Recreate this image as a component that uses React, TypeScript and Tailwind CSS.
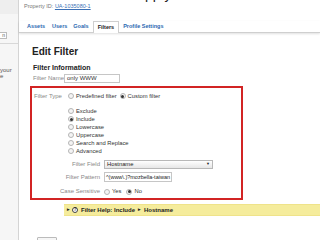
import React from "react";

function Radio({ checked = false }: { checked?: boolean }) {
  return (
    <span className="inline-flex w-[6px] h-[6px] rounded-full border border-[#b5b5b5] bg-[#f4f4f4] items-center justify-center shrink-0">
      {checked && <span className="w-[3px] h-[3px] rounded-full bg-[#333]" />}
    </span>
  );
}

function Opt({ label, checked = false }: { label: string; checked?: boolean }) {
  return (
    <div className="flex items-center h-[8px] gap-[2px]">
      <Radio checked={checked} />
      <span>{label}</span>
    </div>
  );
}

export default function App() {
  return (
    <div
      className="w-[320px] h-[240px] overflow-hidden flex items-start bg-white text-[#333]"
      style={{ fontFamily: '"Liberation Sans", Arial, sans-serif' }}
    >
      {/* sidebar */}
      <div className="w-[19px] h-[240px] shrink-0 border-r border-[#d4d4d4] bg-[#f6f6f6]">
        <div className="h-[14px] bg-[#eeeeee]" />
        <div className="h-[18px]" />
        <div className="w-[7px] h-[7px] border border-l-0 border-[#bbb] bg-white text-[5px] leading-[5px] flex items-center justify-end pr-[1px] text-[#555]">
          n
        </div>
        <div className="h-[4px]" />
        <div className="h-px bg-[#d8d8d8]" />
        <div className="h-[23px]" />
        <div className="text-[6px] leading-[6px] text-[#555]">your</div>
        <div className="text-[6px] leading-[6px] text-[#555]">e</div>
      </div>

      {/* main */}
      <div className="flex-1 min-w-0">
        <div className="h-[3px] overflow-hidden">
          <div className="h-[16px] text-[14px] leading-[16px] text-[#222] -mt-[14px] pl-[126px] whitespace-nowrap">
            pp y
          </div>
        </div>
        <div className="h-[7px] flex items-center pl-[5px] text-[5.5px] text-[#777] whitespace-nowrap">
          Property ID:&nbsp;<span className="text-[#3a6fb5] underline">UA-1035080-1</span>
        </div>
        <div className="h-[11px]" />
        <div className="h-[12px] flex items-end pl-[8px] border-b border-[#cfcfcf] shadow-[0_1px_2px_rgba(0,0,0,0.12)] text-[5.5px] font-bold text-[#2a67b0] whitespace-nowrap">
          <span className="h-[11px] flex items-center">Assets</span>
          <span className="h-[11px] flex items-center ml-[7px]">Users</span>
          <span className="h-[11px] flex items-center ml-[6px]">Goals</span>
          <span className="h-[12px] -mb-px flex items-center ml-[4px] px-[4px] border border-b-0 border-[#cfcfcf] bg-white text-[#222]">
            Filters
          </span>
          <span className="h-[11px] flex items-center ml-[4px]">Profile Settings</span>
        </div>

        <div className="pl-[13px]">
          <div className="h-[12px]" />
          <div className="h-[12px] flex items-center text-[10px] font-bold text-[#222]">Edit Filter</div>
          <div className="h-[7px]" />
          <div className="h-[9px] flex items-center text-[7px] font-bold text-[#222] pl-[1px]">
            Filter Information
          </div>
          <div className="h-[10px] flex items-center pl-[1px] text-[6px] text-[#888] whitespace-nowrap">
            <span className="w-[31px]">Filter Name</span>
            <span className="w-[56px] h-[9px] border border-[#c6c6c6] bg-white text-[#333] flex items-center pl-[2px]">
              only WWW
            </span>
          </div>
          <div className="h-[3px]" />

          {/* red box */}
          <div className="w-[213px] h-[114px] -ml-[2px] border-2 border-[#d22424] flex flex-col text-[5.8px] whitespace-nowrap">
            <div className="h-[4px] shrink-0" />
            <div className="h-[8px] shrink-0 flex items-center">
              <span className="w-[36px] pl-[2px] text-[#888] text-[6px]">Filter Type</span>
              <Radio />
              <span className="ml-[2px]">Predefined filter</span>
              <span className="ml-[3px]" />
              <Radio checked />
              <span className="ml-[2px]">Custom filter</span>
            </div>
            <div className="h-[7px] shrink-0" />
            <div className="pl-[36px] flex flex-col shrink-0">
              <Opt label="Exclude" />
              <Opt label="Include" checked />
              <Opt label="Lowercase" />
              <Opt label="Uppercase" />
              <Opt label="Search and Replace" />
              <Opt label="Advanced" />
            </div>
            <div className="h-[4px] shrink-0" />
            <div className="h-[10px] shrink-0 flex items-center">
              <span className="w-[72px] text-right pr-[4px] text-[#888] text-[6px]">Filter Field</span>
              <span className="w-[109px] h-[9px] border border-[#b8b8b8] bg-gradient-to-b from-white to-[#e6e6e6] flex items-center pl-[2px] text-[#222]">
                Hostname
                <span className="ml-auto mr-[2px] text-[4px] leading-none">▼</span>
              </span>
            </div>
            <div className="h-[3px] shrink-0" />
            <div className="h-[10px] shrink-0 flex items-center">
              <span className="w-[72px] text-right pr-[4px] text-[#888] text-[6px]">Filter Pattern</span>
              <span className="w-[68px] h-[10px] border border-[#c6c6c6] bg-white flex items-center pl-[1px] overflow-hidden text-[5.5px] text-[#222]">
                ^(www\.)?mozbella-taiwan
              </span>
            </div>
            <div className="h-[5px] shrink-0" />
            <div className="h-[9px] shrink-0 flex items-center">
              <span className="w-[72px] text-right pr-[4px] text-[#888] text-[6px]">Case Sensitive</span>
              <Radio />
              <span className="ml-[2px]">Yes</span>
              <span className="ml-[5px]" />
              <Radio checked />
              <span className="ml-[2px]">No</span>
            </div>
          </div>

          <div className="h-[4px]" />
          <div className="ml-[32px] h-[12px] bg-[#f5ec9c] border-y border-[#efe38a] flex items-center pl-[3px] text-[6px] font-bold text-[#222] whitespace-nowrap">
            <span className="text-[5px]">▸</span>
            <span className="ml-[2px] w-[6px] h-[6px] rounded-full border border-[#444] bg-white text-[4.5px] leading-none flex items-center justify-center">
              ?
            </span>
            <span className="ml-[3px]">Filter Help: Include</span>
            <span className="mx-[3px] text-[5px]">▸</span>
            <span>Hostname</span>
          </div>
          <div className="h-[21px]" />
          <div className="ml-[5px] w-[20px] h-[8px] border border-[#bbb] rounded-[1px] bg-[#f6f6f6]" />
        </div>
      </div>
    </div>
  );
}
